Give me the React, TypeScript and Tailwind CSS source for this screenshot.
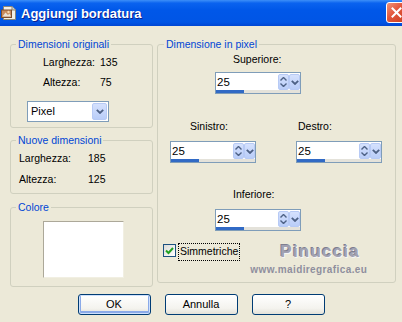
import React from "react";

function SpinButtons() {
  return (
    <div className="mt-[1px] flex h-[16px]">
      <div className="flex h-[16px] w-[11px] flex-col items-center justify-center gap-[2px] rounded-[2px] border border-[#B7CAF5] bg-[linear-gradient(to_bottom,#D5E1FD,#B9CDF8)]">
        <svg width="7" height="4" viewBox="0 0 7 4"><path d="M0.5 3.5 L3.5 0.5 L6.5 3.5" fill="none" stroke="#4D6185" strokeWidth="1.4" /></svg>
        <svg width="7" height="4" viewBox="0 0 7 4"><path d="M0.5 0.5 L3.5 3.5 L6.5 0.5" fill="none" stroke="#4D6185" strokeWidth="1.4" /></svg>
      </div>
      <div className="flex h-[16px] w-[11px] items-center justify-center rounded-[2px] border border-[#B7CAF5] bg-[linear-gradient(to_bottom,#D5E1FD,#B9CDF8)]">
        <svg width="8" height="5" viewBox="0 0 8 5"><path d="M0.8 0.8 L4 4 L7.2 0.8" fill="none" stroke="#4D6185" strokeWidth="1.8" /></svg>
      </div>
    </div>
  );
}

function Spin({ className }: { className: string }) {
  return (
    <div className={`flex h-[22px] w-[86px] flex-col border border-[#7F9DB9] bg-white ${className}`}>
      <div className="flex h-[17px]">
        <span className="flex-1 pl-[1px] pt-[3px] text-[11.5px] leading-[13px] text-black">25</span>
        <SpinButtons />
      </div>
      <div className="flex h-[3px]">
        <div className="w-[28px] bg-[#316AC5]" />
        <div className="flex-1 bg-[#E4E2DA]" />
      </div>
    </div>
  );
}

function XpButton({ label, primary }: { label: string; primary?: boolean }) {
  return (
    <div
      className={`flex h-[21px] w-[73px] items-center justify-center rounded-[3px] border border-[#003C74] bg-[linear-gradient(to_bottom,#FFFFFF,#F4F3EE_70%,#E3E1D8)] text-[11px] text-black ${
        primary ? "shadow-[inset_0_0_0_1px_#CEE0FC,inset_0_-1px_0_2px_#8BAAE8]" : ""
      }`}
    >
      {label}
    </div>
  );
}

export default function App() {
  return (
    <div className="flex h-[322px] w-[402px] flex-col overflow-hidden bg-[#ECE9D8] font-['Liberation_Sans',Arial,sans-serif] text-[10.5px] text-black">
      {/* Title bar */}
      <div className="flex h-[26px] shrink-0 items-center bg-[linear-gradient(to_bottom,#3D8FF8_0%,#0A63EF_12%,#0057E8_40%,#0055E5_85%,#0046D3_100%)]">
        <svg width="17" height="16" viewBox="0 0 17 16" className="ml-[1px] mt-[-1px]">
          <path d="M2.5 1.5 H11 L14.5 5 V14.5 H2.5 Z" fill="#F3EFE6" stroke="#8C8577" />
          <path d="M11 1.5 V5 H14.5" fill="#DDD6C6" stroke="#8C8577" />
          <rect x="0.5" y="5" width="10" height="7.5" fill="#C98B5E" stroke="#7D4E2E" />
          <path d="M1.5 11.5 L4.5 7.5 L7 10 L8.5 8.5 L10 11.5 Z" fill="#E8E2D8" />
          <circle cx="7.5" cy="7" r="1.2" fill="#F6D9B0" />
        </svg>
        <span className="ml-[3px] text-[13px] font-bold leading-[13px] text-white [text-shadow:1px_1px_0_#0A1F8F]">
          Aggiungi bordatura
        </span>
        <div className="ml-auto mr-[-5px] mt-[2px] flex h-[21px] w-[21px] items-center justify-center self-start rounded-[3px] border border-white bg-[linear-gradient(135deg,#F0947A,#E2553A_45%,#C9401F)]">
          <svg width="11" height="11" viewBox="0 0 11 11">
            <path d="M1.5 1.5 L9.5 9.5 M9.5 1.5 L1.5 9.5" stroke="white" strokeWidth="2" strokeLinecap="square" />
          </svg>
        </div>
      </div>

      {/* Content */}
      <div className="flex gap-[4px] pl-[10px] pt-[12px]">
        {/* Left column */}
        <div className="flex w-[143px] flex-col">
          <fieldset className="h-[90px] rounded-[3px] border border-[#D0D0BF]">
            <legend className="ml-[5px] px-[2px] leading-[13px] text-[#0046D5]">Dimensioni originali</legend>
            <div className="flex flex-col gap-[7px] pl-[32px] pt-[5px] leading-[13px]">
              <div className="flex">
                <span className="w-[57px]">Larghezza:</span>
                <span>135</span>
              </div>
              <div className="flex">
                <span className="w-[57px]">Altezza:</span>
                <span>75</span>
              </div>
            </div>
            <div className="ml-[16px] mt-[12px] flex h-[21px] w-[82px] items-center border border-[#7F9DB9] bg-white">
              <span className="flex-1 pl-[3px] text-[11px] leading-[13px]">Pixel</span>
              <div className="mr-[1px] flex h-[17px] w-[15px] items-center justify-center rounded-[2px] border border-[#B7CAF5] bg-[linear-gradient(to_bottom,#D5E1FD,#B9CDF8)]">
                <svg width="8" height="5" viewBox="0 0 8 5"><path d="M0.8 0.8 L4 4 L7.2 0.8" fill="none" stroke="#4D6185" strokeWidth="1.8" /></svg>
              </div>
            </div>
          </fieldset>

          <fieldset className="mt-[6px] h-[60px] rounded-[3px] border border-[#D0D0BF]">
            <legend className="ml-[5px] px-[2px] leading-[13px] text-[#0046D5]">Nuove dimensioni</legend>
            <div className="flex flex-col gap-[8px] pl-[8px] pt-[5px] leading-[13px]">
              <div className="flex">
                <span className="w-[69px]">Larghezza:</span>
                <span>185</span>
              </div>
              <div className="flex">
                <span className="w-[69px]">Altezza:</span>
                <span>125</span>
              </div>
            </div>
          </fieldset>

          <fieldset className="mt-[7px] h-[86px] rounded-[3px] border border-[#D0D0BF]">
            <legend className="ml-[5px] px-[2px] leading-[13px] text-[#0046D5]">Colore</legend>
            <div className="ml-[32px] mt-[7px] h-[57px] w-[81px] border border-b-[#F1EFE2] border-l-[#ACA899] border-r-[#F1EFE2] border-t-[#ACA899] bg-white" />
          </fieldset>
        </div>

        {/* Right column */}
        <fieldset className="h-[245px] w-[239px] rounded-[3px] border border-[#D0D0BF]">
          <legend className="ml-[6px] px-[2px] leading-[13px] text-[#0046D5]">Dimensione in pixel</legend>
          <div className="flex flex-col">
            <span className="ml-[75px] mt-[2px] leading-[13px]">Superiore:</span>
            <Spin className="ml-[57px] mt-[6px]" />

            <div className="mt-[26px] flex">
              <div className="flex flex-col">
                <span className="ml-[32px] leading-[13px]">Sinistro:</span>
                <Spin className="ml-[12px] mt-[8px]" />
              </div>
              <div className="ml-[40px] flex flex-col">
                <span className="ml-[2px] leading-[13px]">Destro:</span>
                <Spin className="mt-[8px]" />
              </div>
            </div>

            <span className="ml-[75px] mt-[25px] leading-[13px]">Inferiore:</span>
            <Spin className="ml-[57px] mt-[8px]" />

            <div className="mt-[12px] flex items-start">
              <div className="ml-[5px] mt-[1px] flex h-[13px] w-[13px] items-center justify-center border border-[#1C5180] bg-[linear-gradient(135deg,#DCDCD7,#FFFFFF)]">
                <svg width="9" height="9" viewBox="0 0 9 9"><path d="M1 4.5 L3.5 7 L8 2" fill="none" stroke="#21A121" strokeWidth="2" /></svg>
              </div>
              <span className="ml-[2px] border border-dotted border-black px-[1px] pb-[2px] pt-[1px] text-[10.5px] leading-[13px]">Simmetriche</span>
              <div className="ml-[10px] flex flex-col">
                <span className="ml-[30px] text-[17px] font-bold leading-[17px] tracking-[1.2px] text-[#A2A2B2] [text-shadow:-1px_-1px_0_#7E7E90,1px_1px_0_#F5F5F5]">
                  Pinuccia
                </span>
                <span className="mt-[5px] text-[10px] font-bold leading-[10px] tracking-[0.4px] text-[#8F8F9E]">
                  www.maidiregrafica.eu
                </span>
              </div>
            </div>
          </div>
        </fieldset>
      </div>

      {/* Buttons */}
      <div className="mt-[7px] flex justify-center gap-[14px]">
        <XpButton label="OK" primary />
        <XpButton label="Annulla" />
        <XpButton label="?" />
      </div>
    </div>
  );
}
